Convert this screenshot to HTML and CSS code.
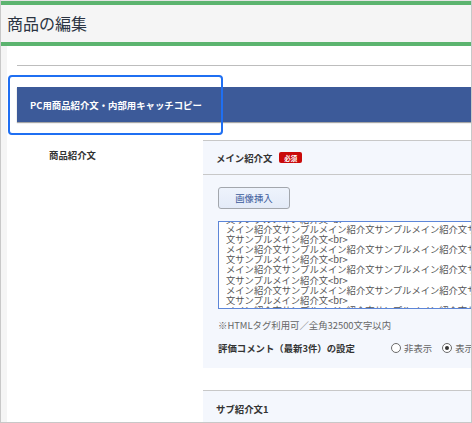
FILE: index.html
```html
<!DOCTYPE html>
<html lang="ja">
<head>
<meta charset="utf-8">
<title>商品の編集</title>
<link rel="stylesheet" href="styles.css">
</head>
<body>
<div class="frame">
  <header class="head"><h1 class="title">商品の編集</h1></header>
  <main class="panel">
    <hr class="rule">
    <div class="section-wrap">
      <div class="section-bar">PC用商品紹介文・内部用キャッチコピー</div>
      <div class="focus-ring"></div>
    </div>
    <div class="row">
      <div class="row-label">商品紹介文</div>
      <div class="row-body">
        <section class="block">
          <div class="block-head">メイン紹介文<span class="badge">必須</span></div>
          <div class="block-body">
            <button class="btn" type="button">画像挿入</button>
            <div class="textarea">
              <div class="ta-inner">
                <div class="ta-line">文サンプルメイン紹介文&lt;br&gt;</div>
                <div class="ta-line">メイン紹介文サンプルメイン紹介文サンプルメイン紹介文サンプルメイン紹介</div>
                <div class="ta-line">文サンプルメイン紹介文&lt;br&gt;</div>
                <div class="ta-line">メイン紹介文サンプルメイン紹介文サンプルメイン紹介文サンプルメイン紹介</div>
                <div class="ta-line">文サンプルメイン紹介文&lt;br&gt;</div>
                <div class="ta-line">メイン紹介文サンプルメイン紹介文サンプルメイン紹介文サンプルメイン紹介</div>
                <div class="ta-line">文サンプルメイン紹介文&lt;br&gt;</div>
                <div class="ta-line">メイン紹介文サンプルメイン紹介文サンプルメイン紹介文サンプルメイン紹介</div>
                <div class="ta-line">文サンプルメイン紹介文&lt;br&gt;</div>
                <div class="ta-line">メイン紹介文サンプルメイン紹介文サンプルメイン紹介文サンプルメイン紹介</div>
              </div>
            </div>
            <p class="note">※HTMLタグ利用可／全角32500文字以内</p>
            <div class="eval">
              <span class="eval-label">評価コメント（最新3件）の設定</span>
              <label class="radio"><span class="radio-dot"></span>非表示</label>
              <label class="radio"><span class="radio-dot is-on"></span>表示</label>
            </div>
          </div>
        </section>
        <section class="block block-sub">
          <div class="block-head">サブ紹介文1</div>
        </section>
      </div>
    </div>
  </main>
</div>
</body>
</html>
```

FILE: styles.css
```css
* { box-sizing: border-box; }
html, body { margin: 0; padding: 0; background: #fff; }
body {
  font-family: "Noto Sans CJK JP", "Noto Sans", sans-serif;
  color: #333;
}
.frame {
  width: 472px;
  height: 423px;
  border: 1px solid #c8c8c8;
  border-top-color: #e4e4e4;
  background: #f5f5f5;
  overflow: hidden;
  display: flex;
  flex-direction: column;
}
.head {
  flex: 0 0 auto;
  height: 45px;
  border-top: 4px solid #5cb46f;
  border-bottom: 4px solid #5cb46f;
  background: #f5f5f5;
  display: flex;
  align-items: center;
  padding: 0 0 1px 6px;
}
.title {
  margin: 0;
  font-size: 16px;
  font-weight: 400;
  line-height: 1;
  color: #2b3442;
}
.panel {
  flex: 1 1 auto;
  margin-left: 6px;
  width: 640px;
  background: #fff;
  padding: 19px 0 0 10px;
}
.rule {
  margin: 0;
  height: 0;
  border: 0;
  border-top: 1px solid #bdbdbd;
}
.section-wrap {
  position: relative;
  margin-top: 21px;
}
.section-bar {
  height: 35px;
  background: #3c5a99;
  color: #fff;
  font-size: 9.4px;
  font-weight: 700;
  display: flex;
  align-items: center;
  padding-left: 13px;
  box-shadow: 0 1px 1px rgba(0, 0, 0, 0.35);
}
.focus-ring {
  position: absolute;
  left: -9px;
  top: -12px;
  width: 215px;
  height: 60px;
  border: 2px solid #1f6ff2;
  border-radius: 4px;
}
.row {
  display: flex;
  margin-top: 18px;
}
.row-label {
  flex: 0 0 186px;
  padding: 10px 0 0 32px;
  font-size: 9.4px;
  line-height: 11px;
  font-weight: 700;
  color: #333;
}
.row-body {
  flex: 0 0 420px;
}
.block {
  background: #f4f7fd;
  border-top: 1px solid #c8c8c8;
}
.block-head {
  height: 34px;
  border-bottom: 1px solid #c8c8c8;
  display: flex;
  align-items: center;
  padding-left: 13px;
  font-size: 9.4px;
  font-weight: 700;
  color: #333;
}
.badge {
  margin-left: 7px;
  width: 23px;
  height: 11px;
  border-radius: 2px;
  background: #c90a0a;
  color: #fff;
  font-size: 6.5px;
  font-weight: 700;
  display: inline-flex;
  align-items: center;
  justify-content: center;
}
.block-body {
  padding: 12px 0 13px 15px;
}
.btn {
  display: block;
  width: 72px;
  height: 22px;
  margin: 0;
  padding: 0;
  border: 1px solid #a3a7ad;
  border-radius: 3px;
  background: linear-gradient(#eef3fc, #e4ebf8);
  color: #3a5a9b;
  font-family: inherit;
  font-size: 9.4px;
  font-weight: 400;
}
.textarea {
  margin-top: 12px;
  width: 340px;
  height: 88px;
  border: 1px solid #5d86d8;
  background: #fff;
  overflow: hidden;
  padding: 0 0 0 7px;
}
.ta-inner {
  margin-top: -8px;
}
.ta-line {
  white-space: nowrap;
  font-size: 9.3px;
  line-height: 10.1px;
  color: #555;
}
.note {
  margin: 10px 0 0;
  font-size: 9.4px;
  line-height: 12px;
  color: #666;
}
.eval {
  margin-top: 10px;
  height: 14px;
  display: flex;
  align-items: center;
  font-size: 9.4px;
}
.eval-label {
  flex: 0 0 173px;
  font-weight: 700;
  color: #333;
}
.radio {
  display: inline-flex;
  align-items: center;
  gap: 3px;
  color: #666;
  margin-right: 10px;
  white-space: nowrap;
}
.radio-dot {
  width: 10px;
  height: 10px;
  border: 1px solid #6b6b6b;
  border-radius: 50%;
  background: #fff;
  display: inline-flex;
  align-items: center;
  justify-content: center;
}
.radio-dot.is-on::after {
  content: "";
  width: 4px;
  height: 4px;
  border-radius: 50%;
  background: #333;
}
.block-sub {
  margin-top: 22px;
}
.block-sub .block-head {
  height: 36px;
  border-bottom: 0;
}
```
